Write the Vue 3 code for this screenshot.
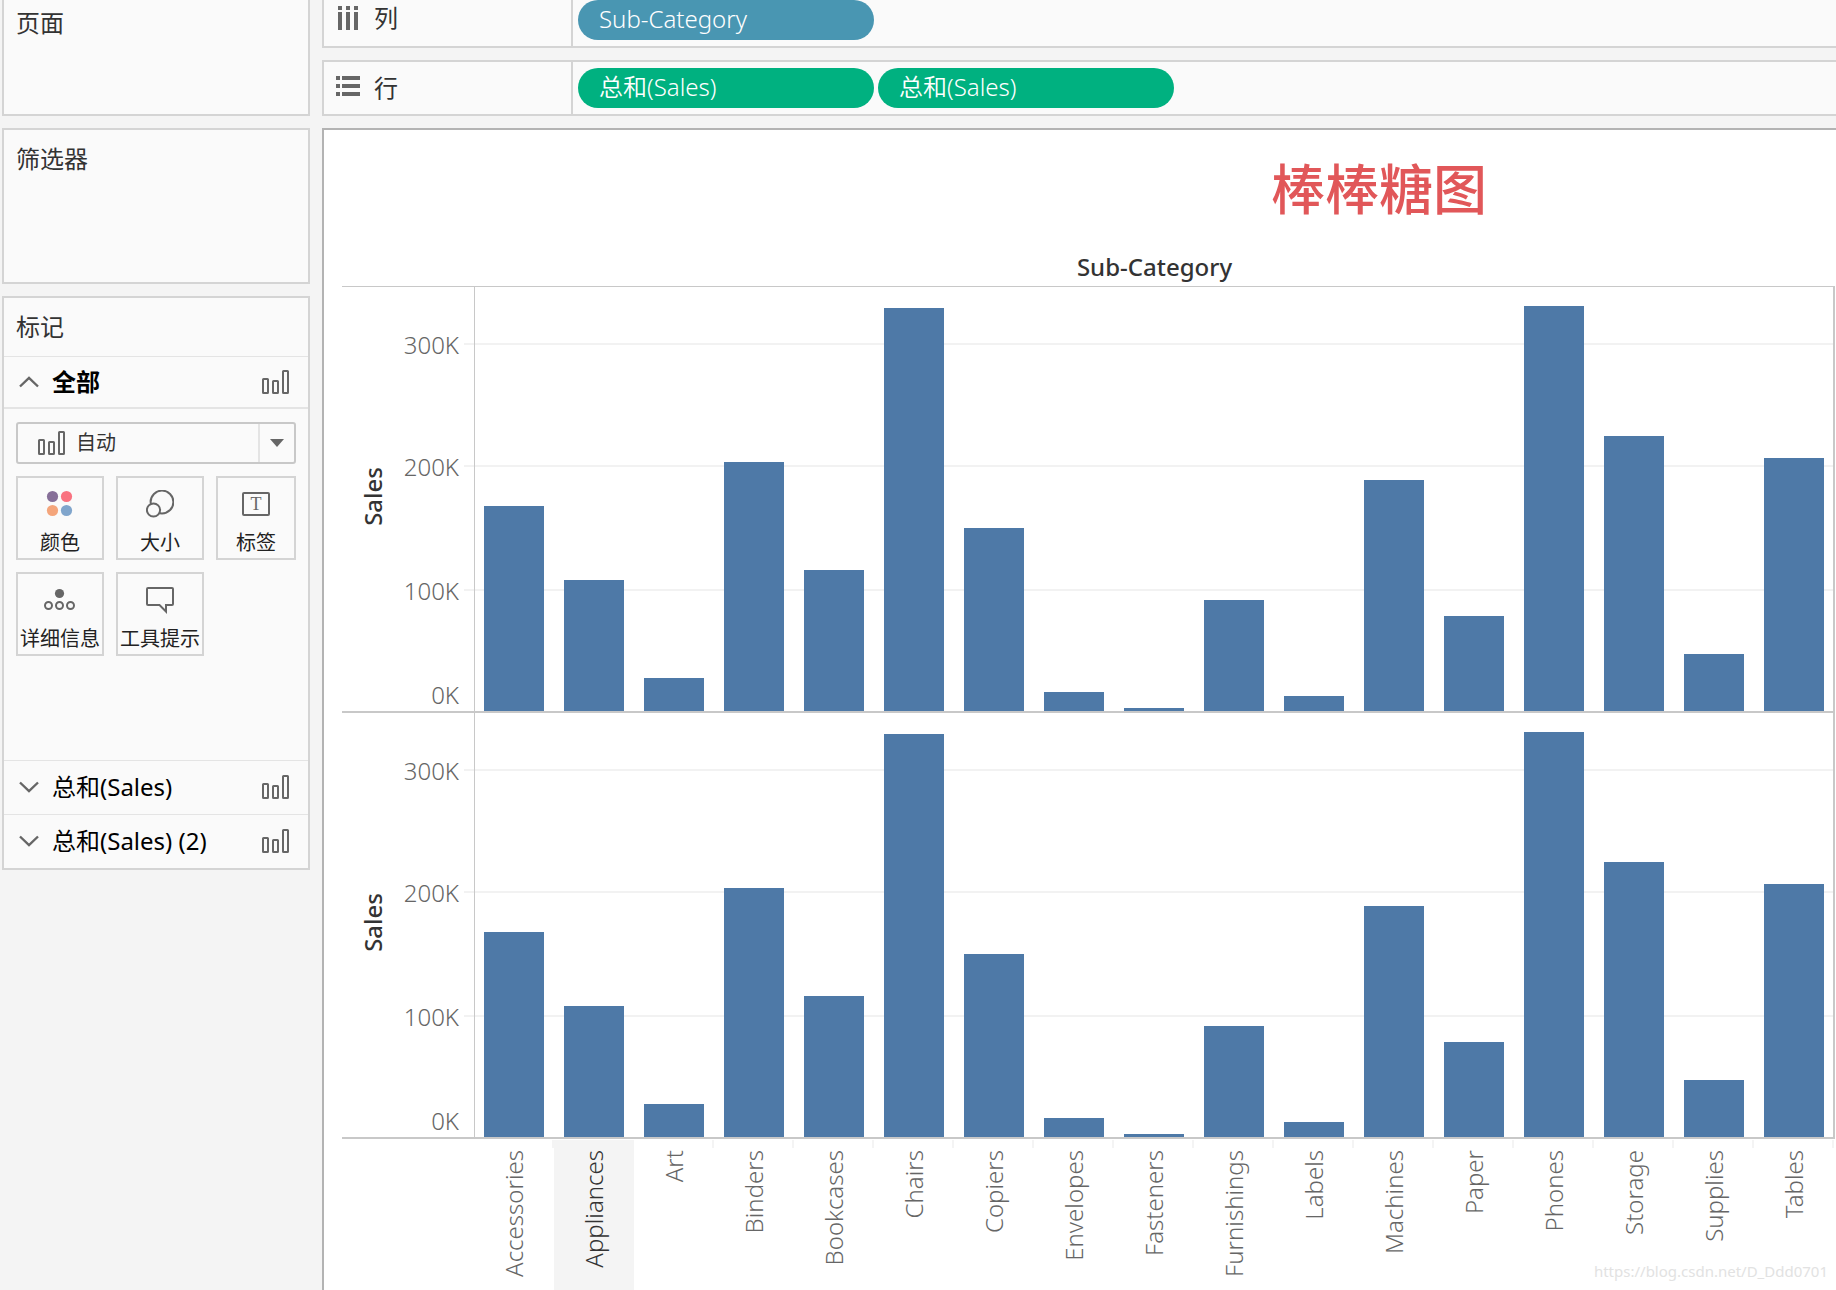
<script setup>
import { h, ref } from 'vue'

const BarsIcon = () =>
  h('svg', { width: 28, height: 24, viewBox: '0 0 28 24', fill: 'none', stroke: '#666', 'stroke-width': 2, 'aria-hidden': 'true' }, [
    h('rect', { x: 1, y: 9, width: 5, height: 14, rx: 0.5 }),
    h('rect', { x: 11, y: 11, width: 5, height: 12, rx: 0.5 }),
    h('rect', { x: 21, y: 1, width: 5, height: 22, rx: 0.5 }),
  ])

const Chevron = (props) =>
  h('svg', { width: 20, height: 12, viewBox: '0 0 20 12', fill: 'none', stroke: '#666', 'stroke-width': 2.4, 'aria-hidden': 'true' }, [
    h('path', { d: props.up ? 'M1 10.5 10 2l9 8.5' : 'M1 1.5 10 10l9-8.5' }),
  ])
Chevron.props = ['up']

const markType = ref('auto')
const sums = ['总和(Sales)', '总和(Sales) (2)']

const ticks = [
  { label: '300K', band: 122 },
  { label: '200K', band: 124 },
  { label: '100K', band: 104 },
  { label: '0K', band: 28 },
]
const gridBands = [58, 122, 124]

const sales = [
  ['Accessories', 167380],
  ['Appliances', 107532],
  ['Art', 27119],
  ['Binders', 203413],
  ['Bookcases', 114880],
  ['Chairs', 328449],
  ['Copiers', 149528],
  ['Envelopes', 16476],
  ['Fasteners', 3024],
  ['Furnishings', 91705],
  ['Labels', 12486],
  ['Machines', 189239],
  ['Paper', 78479],
  ['Phones', 330007],
  ['Storage', 223844],
  ['Supplies', 46674],
  ['Tables', 206966],
].map(([name, value]) => ({ name, value }))

const active = ref('Appliances')
const barHeight = (value) => 2 * Math.round((value * 184) / 300000 + 0.25) - 1 + 'px'
</script>

<template>
  <div class="workspace">
    <aside class="side">
      <section class="card pages"><h2>页面</h2></section>
      <section class="card filters"><h2>筛选器</h2></section>
      <section class="card marks">
        <h2>标记</h2>
        <button class="row all" type="button">
          <Chevron :up="true" /><span>全部</span><BarsIcon />
        </button>
        <div class="marks-body">
          <div class="type">
            <select v-model="markType" aria-label="标记类型">
              <option value="auto">自动</option>
            </select>
            <BarsIcon class="type-icon" />
            <span class="type-caret">
              <svg width="14" height="8" viewBox="0 0 14 8" aria-hidden="true"><path d="M0 0h14L7 8z" fill="#666" /></svg>
            </span>
          </div>
          <div class="tiles">
            <button class="tile" type="button">
              <svg width="28" height="28" viewBox="0 0 28 28" aria-hidden="true">
                <circle cx="6.500" cy="6.500" r="5.600" fill="#866f98" />
                <circle cx="20.500" cy="6.500" r="5.600" fill="#f97280" />
                <circle cx="6.500" cy="20.500" r="5.600" fill="#f4a57b" />
                <circle cx="20.500" cy="20.500" r="5.600" fill="#80a5cc" />
              </svg>
              <span>颜色</span>
            </button>
            <button class="tile" type="button">
              <svg width="28" height="28" viewBox="0 0 28 28" fill="#fafafa" stroke="#666" stroke-width="2" aria-hidden="true">
                <circle cx="16" cy="12" r="11.4" />
                <circle cx="7.5" cy="20" r="6.6" />
              </svg>
              <span>大小</span>
            </button>
            <button class="tile" type="button">
              <svg width="28" height="28" viewBox="0 0 28 28" aria-hidden="true">
                <rect x="1" y="3" width="26" height="22" rx="1" fill="none" stroke="#666" stroke-width="2" />
                <text x="14" y="20" text-anchor="middle" font-family="Liberation Serif, serif" font-size="18" fill="#666">T</text>
              </svg>
              <span>标签</span>
            </button>
            <button class="tile" type="button">
              <svg width="32" height="28" viewBox="0 0 32 28" fill="none" stroke="#666" stroke-width="2" aria-hidden="true">
                <circle cx="15.500" cy="7.500" r="4.6" fill="#666" stroke="none" />
                <circle cx="4.500" cy="19.500" r="3.5" />
                <circle cx="15.500" cy="19.500" r="3.5" />
                <circle cx="26.500" cy="19.500" r="3.5" />
              </svg>
              <span>详细信息</span>
            </button>
            <button class="tile" type="button">
              <svg width="28" height="28" viewBox="0 0 28 28" fill="none" stroke="#666" stroke-width="2" aria-hidden="true">
                <path d="M2 2h24q1 0 1 1v15q0 1-1 1h-6v6.500l-6.500-6.500H2q-1 0-1-1V3q0-1 1-1z" />
              </svg>
              <span>工具提示</span>
            </button>
          </div>
        </div>
        <button v-for="s in sums" :key="s" class="row" type="button">
          <Chevron /><span>{{ s }}</span><BarsIcon />
        </button>
      </section>
    </aside>

    <main class="main">
      <section class="shelf first">
        <div class="shelf-name">
          <svg width="24" height="24" viewBox="0 0 24 24" fill="#666" aria-hidden="true">
            <path d="M2 0h4v4H2zM10 0h4v4h-4zM18 0h4v4h-4zM2 6h4v18H2zM10 6h4v18h-4zM18 6h4v18h-4z" />
          </svg>
          <span>列</span>
        </div>
        <div class="pills"><button class="pill blue" type="button">Sub-Category</button></div>
      </section>
      <section class="shelf">
        <div class="shelf-name">
          <svg width="24" height="24" viewBox="0 0 24 24" fill="#666" aria-hidden="true">
            <path d="M0 0h4v4H0zM0 8h4v4H0zM0 16h4v4H0zM6 0h18v4H6zM6 8h18v4H6zM6 16h18v4H6z" />
          </svg>
          <span>行</span>
        </div>
        <div class="pills">
          <button class="pill" type="button">总和(Sales)</button>
          <button class="pill" type="button">总和(Sales)</button>
        </div>
      </section>

      <section class="sheet">
        <h1>棒棒糖图</h1>
        <div class="chart">
          <div class="field">Sub-Category</div>
          <div class="panels">
            <div v-for="p in 2" :key="p" class="panel">
              <div class="axis-title"><span>Sales</span></div>
              <div class="axis">
                <span v-for="t in ticks" :key="t.label" :style="{ height: t.band + 'px' }">{{ t.label }}</span>
              </div>
              <div class="lines">
                <i v-for="b in gridBands" :key="b" :style="{ height: b + 'px' }"></i>
              </div>
              <div class="bars">
                <div v-for="d in sales" :key="d.name" class="slot">
                  <div class="bar" :style="{ height: barHeight(d.value) }"></div>
                </div>
              </div>
            </div>
          </div>
          <div class="names">
            <div v-for="d in sales" :key="d.name" class="name" :class="{ active: d.name === active }">
              <span>{{ d.name }}</span>
            </div>
          </div>
        </div>
      </section>
    </main>
    <div class="watermark">https://blog.csdn.net/D_Ddd0701</div>
  </div>
</template>

<style>
body {
  margin: 0;
  background: #f4f4f4;
}
</style>

<style scoped>
* {
  box-sizing: border-box;
}
.workspace {
  position: relative;
  display: flex;
  gap: 12px;
  min-height: 100vh;
  padding-left: 2px;
  overflow: hidden;
  background: #f4f4f4;
  color: #333;
  font-family: "Noto Sans", "Noto Sans CJK SC", sans-serif;
  font-size: 24px;
  line-height: 28px;
}
button,
select {
  margin: 0;
  padding: 0;
  border: 0;
  background: none;
  color: inherit;
  font: inherit;
  text-align: left;
}
h1,
h2 {
  margin: 0;
  font-weight: 400;
}
h2 {
  font-size: 24px;
  line-height: 28px;
}
.side {
  flex: none;
  width: 308px;
  display: flex;
  flex-direction: column;
  gap: 12px;
}
.card {
  border: 2px solid #d4d4d4;
  background: #fafafa;
}
.card h2 {
  padding: 15px 12px 0;
}
.pages {
  height: 116px;
  border-top: 0;
}
.card.pages h2 {
  padding-top: 9px;
}
.filters {
  height: 156px;
}
.marks h2 {
  height: 58px;
}
.row {
  display: flex;
  align-items: center;
  width: 100%;
  height: 54px;
  padding: 0 18px 2px 15px;
  border-top: 1px solid #e4e4e4;
  color: #000;
}
.row span {
  flex: 1;
  padding-left: 13px;
}
.row.all {
  height: 53px;
  padding-bottom: 0;
  border-bottom: 2px solid #e4e4e4;
}
.row.all span {
  font-weight: 700;
}
.marks-body {
  min-height: 351px;
  padding: 13px 12px 0;
}
.type {
  display: grid;
  grid-template-columns: 22px 28px 1fr 38px;
  align-items: center;
  height: 42px;
}
.type select {
  grid-area: 1 / 1 / 2 / 5;
  width: 100%;
  height: 42px;
  padding-left: 58px;
  border: 2px solid #c8c8c8;
  border-radius: 3px;
  appearance: none;
  font-size: 20px;
  line-height: 24px;
}
.type-icon {
  grid-area: 1 / 2;
  pointer-events: none;
}
.type-caret {
  grid-area: 1 / 4;
  display: flex;
  align-items: center;
  height: 38px;
  padding-left: 10px;
  border-left: 2px solid #e4e4e4;
  pointer-events: none;
}
.tiles {
  display: grid;
  grid-template-columns: 88px 88px 80px;
  gap: 12px;
  margin-top: 12px;
}
.tile {
  display: flex;
  flex-direction: column;
  align-items: center;
  gap: 13px;
  height: 84px;
  padding-top: 12px;
  border: 2px solid #d4d4d4;
  color: #222;
  font-size: 20px;
  line-height: 24px;
  white-space: nowrap;
}
.main {
  flex: 1;
  min-width: 0;
  display: flex;
  flex-direction: column;
  gap: 12px;
}
.shelf {
  display: flex;
  height: 56px;
  border: 2px solid #d4d4d4;
  border-right: 0;
  background: #fafafa;
}
.shelf.first {
  height: 48px;
  border-top: 0;
}
.shelf-name {
  display: flex;
  align-items: center;
  gap: 14px;
  width: 249px;
  padding: 0 12px;
  border-right: 2px solid #d4d4d4;
}
.first .shelf-name {
  padding-bottom: 10px;
}
.first .pills {
  padding-bottom: 6px;
}
.pills {
  display: flex;
  align-items: center;
  gap: 4px;
  padding-left: 5px;
}
.pill {
  width: 296px;
  height: 40px;
  padding: 0 21px 2px;
  border-radius: 20px;
  background: #00b180;
  color: #fff;
  font-weight: 350;
}
.pill.blue {
  background: #4996b2;
}
.sheet {
  flex: 1;
  border: 2px solid #b3b3b3;
  border-width: 2px 0 0 2px;
  background: #fff;
}
h1 {
  padding: 23px 0 0 598px;
  color: #e15759;
  font-size: 54px;
  font-weight: 500;
  line-height: 72px;
  text-align: center;
}
.chart {
  padding: 28px 1px 0 18px;
}
.field {
  height: 33px;
  padding-left: 132px;
  font-weight: 500;
  text-align: center;
}
.panels {
  border-top: 1px solid #c8c8c8;
  border-right: 2px solid #c8c8c8;
}
.panel {
  display: grid;
  grid-template-columns: 64px 53px 5px 10px 1fr;
  grid-template-rows: 424px;
  border-bottom: 2px solid #c8c8c8;
}
.axis-title {
  display: flex;
  align-items: center;
  justify-content: center;
  padding: 0 2px 6px 0;
  font-weight: 500;
}
.axis-title span,
.name span {
  writing-mode: vertical-rl;
  transform: rotate(180deg);
  white-space: nowrap;
}
.axis {
  display: flex;
  flex-direction: column;
  align-items: flex-end;
  padding-top: 44px;
  color: #666;
  font-weight: 350;
}
.lines {
  grid-area: 1 / 4 / 2 / 6;
}
.lines i {
  display: block;
  border-bottom: 2px solid #f2f2f2;
}
.bars {
  grid-area: 1 / 5;
  display: flex;
  margin-right: -1px;
  background: linear-gradient(#c8c8c8, #c8c8c8) left / 1px 100% no-repeat;
}
.slot {
  flex: 1;
  display: flex;
  align-items: flex-end;
  justify-content: center;
}
.bar {
  width: 75%;
  background: #4e79a7;
}
.names {
  display: flex;
  padding: 1px 1px 0 132px;
}
.name {
  flex: 1;
  display: flex;
  justify-content: center;
  align-items: flex-start;
  height: 150px;
  padding-top: 10px;
  background: linear-gradient(#f4f4f4, #f4f4f4) right top / 2px 8px no-repeat;
  color: #666;
  font-weight: 350;
}
.name.active {
  background: #f4f4f4;
  color: #333;
}
.watermark {
  position: absolute;
  right: 8px;
  bottom: 7px;
  color: #e2e2e2;
  font-size: 15px;
  line-height: 24px;
}
</style>
